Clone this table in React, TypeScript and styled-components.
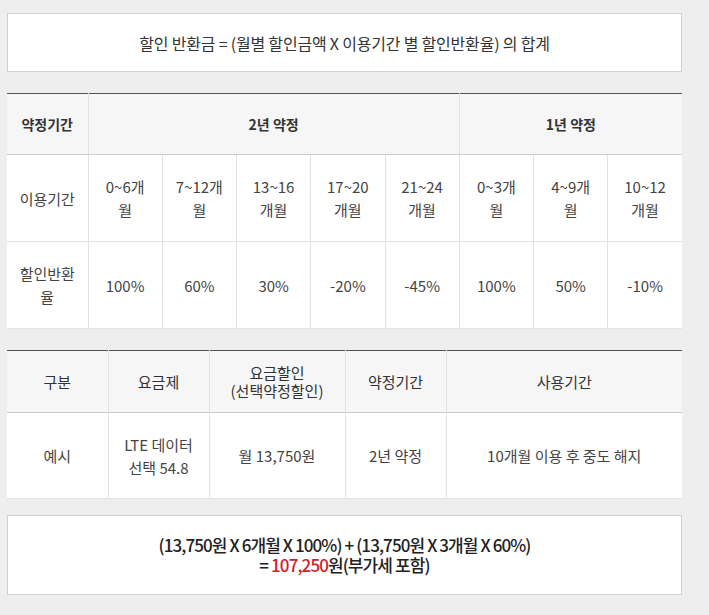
import styled, { createGlobalStyle } from "styled-components";

const GlobalStyle = createGlobalStyle`
  html, body {
    margin: 0;
    padding: 0;
    background: #eeeeee;
  }
  body {
    font-family: "Noto Sans CJK KR", "Noto Sans", sans-serif;
    color: #333;
  }
`;

const Page = styled.div`
  width: 675px;
  padding: 13px 0 0 7px;
  display: flex;
  flex-direction: column;
`;

const FormulaBox = styled.div<{ $tall?: boolean }>`
  box-sizing: border-box;
  height: ${(p) => (p.$tall ? 80 : 59)}px;
  background: #fff;
  border: 1px solid #cfcfcf;
  display: flex;
  flex-direction: column;
  align-items: center;
  justify-content: center;
  text-align: center;
  font-size: ${(p) => (p.$tall ? 17 : 16)}px;
  font-weight: ${(p) => (p.$tall ? 500 : 400)};
  line-height: ${(p) => (p.$tall ? 20 : 20)}px;
  letter-spacing: ${(p) => (p.$tall ? -0.9 : -0.2)}px;
  color: ${(p) => (p.$tall ? "#222" : "#333")};
`;

const Red = styled.span`
  color: #d3202a;
`;

const Table = styled.table<{ $gap: number }>`
  margin-top: ${(p) => p.$gap}px;
  width: 675px;
  border-collapse: collapse;
  table-layout: fixed;
  border-top: 1px solid #555;
  background: #fff;
  font-size: 14px;
`;

const Th = styled.th<{ $bold?: boolean; $h: number }>`
  height: ${(p) => p.$h}px;
  padding: 0;
  background: #f6f6f6;
  border-left: 1px solid #e2e2e2;
  border-bottom: 1px solid #cccccc;
  font-weight: ${(p) => (p.$bold ? 700 : 400)};
  font-size: ${(p) => (p.$bold ? 14 : 15)}px;
  line-height: 18px;
  color: #333;
  &:first-child {
    border-left: none;
  }
`;

const Td = styled.td<{ $h: number }>`
  height: ${(p) => p.$h}px;
  padding: 0;
  text-align: center;
  border-left: 1px solid #e2e2e2;
  border-bottom: 1px solid #e2e2e2;
  font-size: 15px;
  line-height: 23px;
  color: #444;
  white-space: nowrap;
  &:first-child {
    border-left: none;
  }
`;

const Gap = styled.div`
  height: 16px;
`;

const periods: [string, string][] = [
  ["0~6개", "월"],
  ["7~12개", "월"],
  ["13~16", "개월"],
  ["17~20", "개월"],
  ["21~24", "개월"],
  ["0~3개", "월"],
  ["4~9개", "월"],
  ["10~12", "개월"],
];
const rates = ["100%", "60%", "30%", "-20%", "-45%", "100%", "50%", "-10%"];

export default function App() {
  return (
    <>
      <GlobalStyle />
      <Page>
        <FormulaBox>할인 반환금 = (월별 할인금액 X 이용기간 별 할인반환율) 의 합계</FormulaBox>

        <Table $gap={21}>
          <colgroup>
            <col style={{ width: 81 }} />
            {periods.map((_, i) => (
              <col key={i} />
            ))}
          </colgroup>
          <thead>
            <tr>
              <Th $bold $h={60}>약정기간</Th>
              <Th $bold $h={60} colSpan={5}>2년 약정</Th>
              <Th $bold $h={60} colSpan={3}>1년 약정</Th>
            </tr>
          </thead>
          <tbody>
            <tr>
              <Td $h={86}>이용기간</Td>
              {periods.map(([a, b], i) => (
                <Td key={i} $h={86}>
                  {a}
                  <br />
                  {b}
                </Td>
              ))}
            </tr>
            <tr>
              <Td $h={86}>
                할인반환
                <br />율
              </Td>
              {rates.map((r, i) => (
                <Td key={i} $h={86}>{r}</Td>
              ))}
            </tr>
          </tbody>
        </Table>

        <Table $gap={21}>
          <colgroup>
            <col style={{ width: 101 }} />
            <col style={{ width: 101 }} />
            <col style={{ width: 136 }} />
            <col style={{ width: 101 }} />
            <col />
          </colgroup>
          <thead>
            <tr>
              <Th $h={61}>구분</Th>
              <Th $h={61}>요금제</Th>
              <Th $h={61}>요금할인<br />(선택약정할인)</Th>
              <Th $h={61}>약정기간</Th>
              <Th $h={61}>사용기간</Th>
            </tr>
          </thead>
          <tbody>
            <tr>
              <Td $h={85}>예시</Td>
              <Td $h={85}>LTE 데이터<br />선택 54.8</Td>
              <Td $h={85}>월 13,750원</Td>
              <Td $h={85}>2년 약정</Td>
              <Td $h={85}>10개월 이용 후 중도 해지</Td>
            </tr>
          </tbody>
        </Table>

        <Gap />
        <FormulaBox $tall>
          <div>(13,750원 X 6개월 X 100%) + (13,750원 X 3개월 X 60%)</div>
          <div>= <Red>107,250</Red>원(부가세 포함)</div>
        </FormulaBox>
      </Page>
    </>
  );
}
